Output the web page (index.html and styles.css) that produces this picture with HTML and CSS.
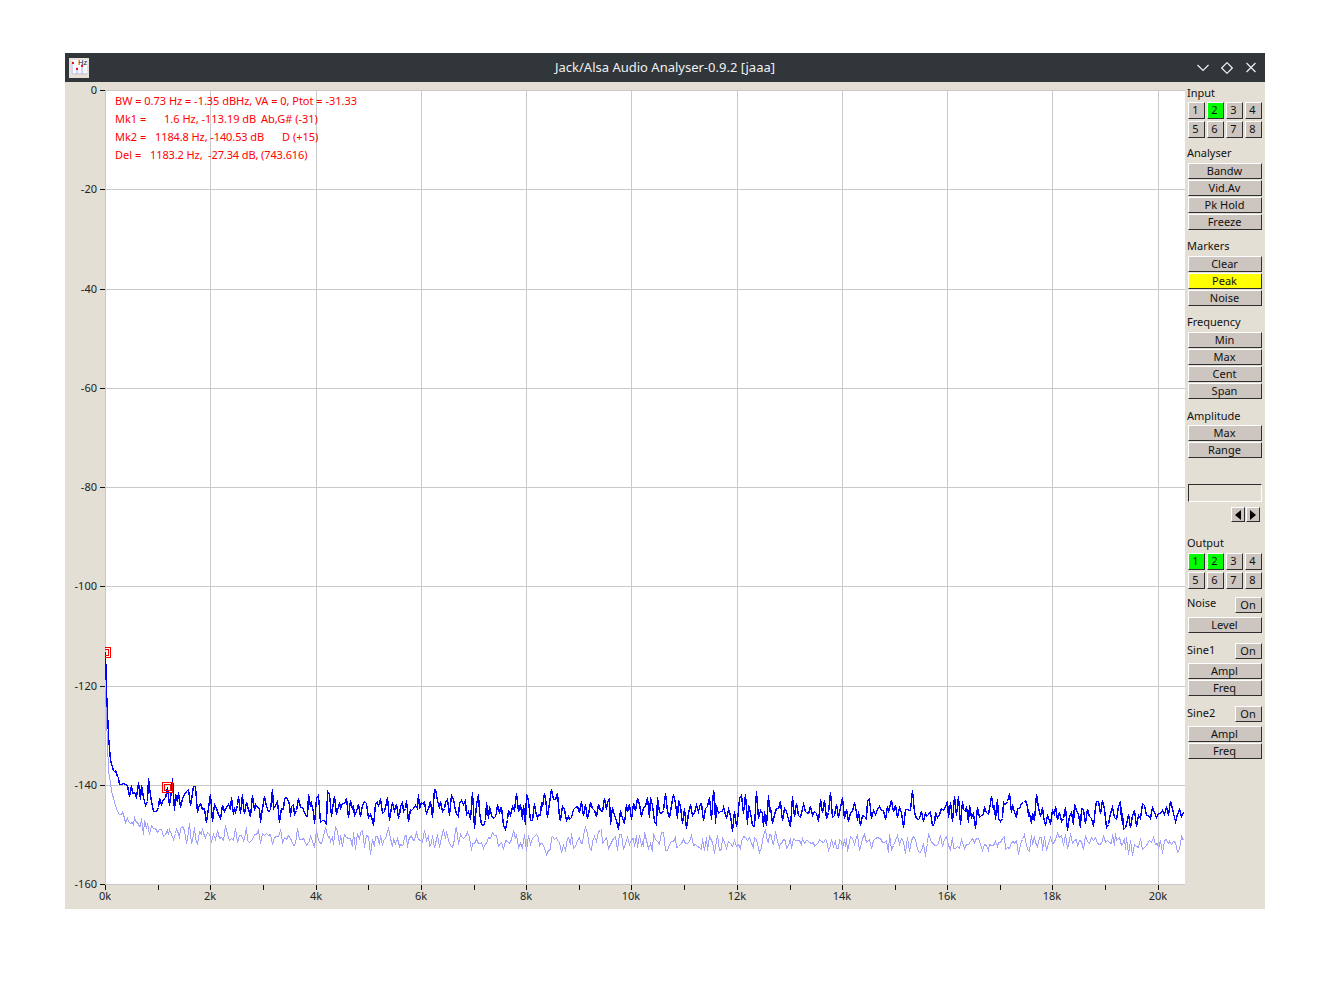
FILE: index.html
```html
<!DOCTYPE html>
<html lang="en">
<head>
<meta charset="utf-8">
<title>Jack/Alsa Audio Analyser-0.9.2 [jaaa]</title>
<link rel="stylesheet" href="styles.css">
</head>
<body>
<div class="window">
  <header class="titlebar">
    <svg class="app-icon" width="20" height="20" viewBox="0 0 20 20">
      <rect width="20" height="20" fill="#e6e0da"/>
      <rect x="2" y="2" width="16" height="16" fill="#fbfbff"/>
      <path d="M3 3V16H18M8 9V16M13 6V16" fill="none" stroke="#a9b4ee" stroke-width="1"/>
      <path d="M2 17H18" stroke="#e9c7a0"/>
      <rect x="3" y="4" width="2" height="2" fill="#e8101c"/>
      <rect x="7" y="10" width="2" height="2" fill="#e8101c"/>
      <rect x="12" y="7" width="2" height="2" fill="#e8101c"/>
      <text class="icon-text" x="9" y="7">Hz</text>
    </svg>
    <div class="title">Jack/Alsa Audio Analyser-0.9.2 [jaaa]</div>
    <div class="controls">
      <svg width="12" height="12" viewBox="0 0 12 12"><path d="M0.5 3L6 8.5L11.5 3" class="ctl"/></svg>
      <svg width="12" height="12" viewBox="0 0 12 12"><path d="M6 0.7L11.3 6L6 11.3L0.7 6Z" class="ctl"/></svg>
      <svg width="12" height="12" viewBox="0 0 12 12"><path d="M1.5 1L10.5 10M10.5 1L1.5 10" class="ctl"/></svg>
    </div>
  </header>
  <div class="body">
    <div class="scope">
      <svg id="plot" class="plot" width="1120" height="827" viewBox="0 0 1120 827">
        <rect x="40" y="8" width="1080" height="794" fill="#ffffff"/>
        <path class="grid" d="M40.5 8V802M145.5 8V802M251.5 8V802M356.5 8V802M461.5 8V802M566.5 8V802M672.5 8V802M777.5 8V802M882.5 8V802M987.5 8V802M1093.5 8V802M40 8.5H1120M40 107.5H1120M40 207.5H1120M40 306.5H1120M40 405.5H1120M40 504.5H1120M40 604.5H1120M40 703.5H1120M40 802.5H1120"/>
        <path class="tick" d="M35 8.5H40M35 107.5H40M35 207.5H40M35 306.5H40M35 405.5H40M35 504.5H40M35 604.5H40M35 703.5H40M35 802.5H40M40.5 803V808M93.5 803V808M145.5 803V808M198.5 803V808M251.5 803V808M303.5 803V808M356.5 803V808M409.5 803V808M461.5 803V808M514.5 803V808M566.5 803V808M619.5 803V808M672.5 803V808M725.5 803V808M777.5 803V808M830.5 803V808M882.5 803V808M935.5 803V808M987.5 803V808M1040.5 803V808M1093.5 803V808"/>
        <g class="ylabels">
          <text x="32" y="12">0</text><text x="32" y="111">-20</text><text x="32" y="211">-40</text><text x="32" y="310">-60</text><text x="32" y="409">-80</text><text x="32" y="508">-100</text><text x="32" y="608">-120</text><text x="32" y="707">-140</text><text x="32" y="806">-160</text>
        </g>
        <g class="xlabels">
          <text x="40" y="818">0k</text><text x="145" y="818">2k</text><text x="251" y="818">4k</text><text x="356" y="818">6k</text><text x="461" y="818">8k</text><text x="566" y="818">10k</text><text x="672" y="818">12k</text><text x="777" y="818">14k</text><text x="882" y="818">16k</text><text x="987" y="818">18k</text><text x="1093" y="818">20k</text>
        </g>
        <path id="trace-avg" class="trace-avg" d=""/>
        <path id="trace-main" class="trace-main" d=""/>
        <path class="marker" d="M40 565.5H45.5V575.5H40M40 567.5H43.5V573.5H40"/>
        <path class="marker" d="M97.5 700.5H107.5V710.5H97.5ZM99.5 702.5H105.5V708.5H99.5Z"/>
        <g class="readout">
          <text class="fit-a" x="50" y="23">BW = 0.73 Hz = -1.35 dBHz, VA = 0, Ptot = -31.33</text>
          <text x="50" y="41">Mk1 =</text><text x="99" y="41">1.6 Hz, -113.19 dB</text><text x="196" y="41">Ab,G# (-31)</text>
          <text x="50" y="59">Mk2 =</text><text class="fit-b" x="90" y="59">1184.8 Hz, -140.53 dB</text><text x="217" y="59">D (+15)</text>
          <text x="50" y="77">Del =</text><text class="fit-b" x="85" y="77">1183.2 Hz,</text><text class="fit-b" x="143" y="77">-27.34 dB, (743.616)</text>
        </g>
      </svg>
    </div>
    <aside class="panel">
      <section class="g-first">
        <div class="lbl">Input</div>
        <div class="nums nums-tight">
          <button class="btn">1</button><button class="btn green">2</button><button class="btn">3</button><button class="btn">4</button>
          <button class="btn">5</button><button class="btn">6</button><button class="btn">7</button><button class="btn">8</button>
        </div>
      </section>
      <section class="g">
        <div class="lbl">Analyser</div>
        <div class="stack">
          <button class="btn">Bandw</button><button class="btn">Vid.Av</button><button class="btn">Pk Hold</button><button class="btn">Freeze</button>
        </div>
      </section>
      <section class="g">
        <div class="lbl">Markers</div>
        <div class="stack">
          <button class="btn">Clear</button><button class="btn yellow">Peak</button><button class="btn">Noise</button>
        </div>
      </section>
      <section class="g">
        <div class="lbl">Frequency</div>
        <div class="stack">
          <button class="btn">Min</button><button class="btn">Max</button><button class="btn">Cent</button><button class="btn">Span</button>
        </div>
      </section>
      <section class="g g-amp">
        <div class="lbl">Amplitude</div>
        <div class="stack stack-tight">
          <button class="btn">Max</button><button class="btn">Range</button>
        </div>
      </section>
      <div class="entry"></div>
      <div class="arrows">
        <button class="btn arrow"><span class="tri-l"></span></button><button class="btn arrow"><span class="tri-r"></span></button>
      </div>
      <section class="g-output">
        <div class="lbl">Output</div>
        <div class="nums">
          <button class="btn green">1</button><button class="btn green">2</button><button class="btn">3</button><button class="btn">4</button>
          <button class="btn">5</button><button class="btn">6</button><button class="btn">7</button><button class="btn">8</button>
        </div>
      </section>
      <section class="g-gen g-noise">
        <div class="row"><span class="lbl lbl-up">Noise</span><button class="btn on">On</button></div>
        <div class="stack stack-gen"><button class="btn">Level</button></div>
      </section>
      <section class="g-gen">
        <div class="row"><span class="lbl">Sine1</span><button class="btn on">On</button></div>
        <div class="stack stack-gen"><button class="btn">Ampl</button><button class="btn">Freq</button></div>
      </section>
      <section class="g-gen">
        <div class="row"><span class="lbl">Sine2</span><button class="btn on">On</button></div>
        <div class="stack stack-gen"><button class="btn">Ampl</button><button class="btn">Freq</button></div>
      </section>
    </aside>
  </div>
</div>
<script src="app.js"></script>
</body>
</html>
```
FILE: styles.css
```css
* { box-sizing: border-box; }
html, body { margin: 0; padding: 0; background: #ffffff; }
body { padding: 53px 65px 77px; font-family: "Noto Sans", "Open Sans", sans-serif; font-size: 11px; color: #111; }

.window { width: 1200px; height: 856px; display: flex; flex-direction: column; background: #e3dfd4; }

.titlebar { position: relative; height: 29px; flex: none; background: #31363b; display: flex; align-items: center; padding: 0 4px; }
.app-icon { flex: none; }
.icon-text { font-family: "Noto Sans", sans-serif; font-size: 7.5px; fill: #111; }
.title { position: absolute; left: 0; right: 0; text-align: center; font-size: 13px; line-height: 29px; color: #eff0f1; pointer-events: none; }
.controls { margin-left: auto; display: flex; gap: 12px; padding-right: 4px; }
.controls svg { display: block; }
.ctl { fill: none; stroke: #eff0f1; stroke-width: 1.2; }

.body { flex: 1; display: flex; min-height: 0; }
.scope { width: 1120px; flex: none; }
.plot { display: block; }
.grid { fill: none; stroke: #c9c9c9; stroke-width: 1; shape-rendering: crispEdges; }
.tick { fill: none; stroke: #111; stroke-width: 1; shape-rendering: crispEdges; }
.ylabels text { font-size: 11px; fill: #222; text-anchor: end; }
.xlabels text { font-size: 11px; fill: #222; text-anchor: middle; }
.readout text { font-size: 11px; fill: #ff0000; white-space: pre; }
.readout .fit-a { letter-spacing: -0.02px; }
.readout .fit-b { letter-spacing: -0.1px; }
.trace-main { fill: none; stroke: #0000ff; stroke-width: 1.4; shape-rendering: crispEdges; }
.trace-avg { fill: none; stroke: #a0a0ff; stroke-width: 1; shape-rendering: crispEdges; }
.marker { fill: none; stroke: #ff0000; stroke-width: 1; shape-rendering: crispEdges; }

.panel { width: 80px; flex: none; padding-left: 3px; }
.lbl { display: block; height: 14px; line-height: 14px; margin-left: -1px; white-space: nowrap; color: #111; }
.lbl-up { margin-top: -1px; }
.g-first { margin-top: 4px; }
.g { margin-top: 8px; }
.g-amp { margin-top: 9px; }
.nums { display: grid; grid-template-columns: repeat(4, 17px); grid-auto-rows: 17px; gap: 2px; margin-top: 3px; }
.nums-tight { margin-top: 2px; }
.nums .btn { padding: 0 2px 1px 0; }
.stack { margin-top: 3px; width: 74px; display: flex; flex-direction: column; gap: 1px; padding-bottom: 1px; }
.stack-tight { margin-top: 2px; }
.stack-gen { margin-top: 4px; padding-bottom: 0; }
.stack .btn { display: block; width: 74px; height: 16px; }

.btn {
  font: inherit; color: #111; padding: 0 1px 0 0; margin: 0; line-height: 14px; text-align: center;
  background: #cdc5bf; border: 1px solid; border-color: #ffffff #2e2e2e #2e2e2e #ffffff; border-radius: 0;
}
.green { background: #00ff00; }
.yellow { background: #ffff00; }

.entry { margin-top: 25px; width: 74px; height: 18px; border: 1px solid; border-color: #2e2e2e #ffffff #ffffff #2e2e2e; }
.arrows { margin-top: 5px; display: flex; justify-content: flex-end; gap: 1px; width: 72px; }
.arrow { width: 14px; height: 15px; display: flex; align-items: center; justify-content: center; padding: 0; }
.tri-l, .tri-r { display: block; width: 0; height: 0; border-top: 5px solid transparent; border-bottom: 5px solid transparent; }
.tri-l { border-right: 6px solid #000; }
.tri-r { border-left: 6px solid #000; }

.g-output { margin-top: 14px; }
.g-gen { margin-top: 10px; width: 74px; }
.g-noise { margin-top: 8px; }
.row { display: flex; justify-content: space-between; align-items: flex-start; height: 16px; }
.on { width: 27px; height: 16px; padding: 0 1px 1px 0; }
```
FILE: app.js
```js
(function () {
  var seed = 20731;
  function rnd() {
    seed = (seed + 0x6D2B79F5) | 0;
    var t = Math.imul(seed ^ (seed >>> 15), 1 | seed);
    t = (t + Math.imul(t ^ (t >>> 7), 61 | t)) ^ t;
    return ((t ^ (t >>> 14)) >>> 0) / 4294967296;
  }
  function noise() { return (rnd() + rnd() + rnd() - 1.5) * 2; }

  function lerp(table, x) {
    for (var i = 1; i < table.length; i++) {
      if (x <= table[i][0]) {
        var a = table[i - 1], b = table[i];
        return a[1] + (b[1] - a[1]) * (x - a[0]) / (b[0] - a[0]);
      }
    }
    return table[table.length - 1][1];
  }

  /* Curves and notable points are page coordinates, shifted into the svg below. */
  var mainBase = [[105,652],[106,690],[108,735],[110,760],[113,770],[120,782],[130,791],[145,796],[165,799],[200,804],[300,807],[500,809],[800,811],[1185,813]];
  var avgBase = [[105,690],[108,770],[112,795],[118,812],[130,820],[150,828],[170,832],[250,836],[400,840],[700,842],[1185,843]];
  var mainPeaks = {279:822,328:791,435:789,525:824,551:789,619:829,665:793,687:828,830:792,913:790,958:796,992:796,1010:793,1067:830,167:787,207:822};
  var avgPeaks = {370:854,457:827,547:854,624:849,715:853,905:853,1018:854};

  function build(base, peaks, amp, ramp) {
    var d = '';
    for (var x = 105; x < 1185; x += (x < 115 ? 1 : (rnd() < 0.25 ? 1 : 2))) {
      var y = lerp(base, x);
      if (x > 112) {
        y += noise() * amp * Math.min(1, (x - 105) / ramp);
      }
      for (var k = 0; k < 2; k++) {
        if (peaks[x + k] !== undefined) y = peaks[x + k];
      }
      d += (d ? 'L' : 'M') + (x - 65 + 0.5) + ' ' + (Math.round(y) - 82 + 0.5);
    }
    return d;
  }

  document.getElementById('trace-main').setAttribute('d', build(mainBase, mainPeaks, 8, 40));
  document.getElementById('trace-avg').setAttribute('d', build(avgBase, avgPeaks, 5, 40));
})();
```
